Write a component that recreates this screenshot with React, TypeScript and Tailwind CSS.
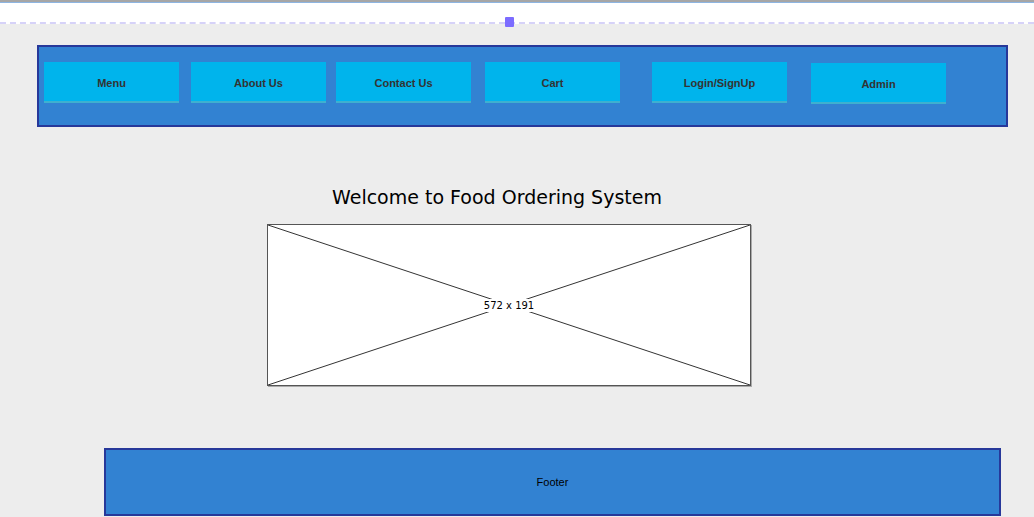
export default function App() {
  const items = [
    { label: "Menu", cls: "ml-0" },
    { label: "About Us", cls: "ml-[12px]" },
    { label: "Contact Us", cls: "ml-[10px]" },
    { label: "Cart", cls: "ml-[14px]" },
    { label: "Login/SignUp", cls: "ml-[32px]" },
    { label: "Admin", cls: "ml-[24px] mt-[1px]" },
  ];

  return (
    <div className="w-[1034px] h-[517px] overflow-hidden bg-[#ededed] flex flex-col" style={{ fontFamily: '"Liberation Sans", Arial, sans-serif' }}>
      {/* editor strip */}
      <div className="h-[2px] bg-[#a6a6a6]" />
      <div className="h-[1px] bg-[#8db5e2]" />
      <div className="relative h-[21px] bg-white border-b-2 border-dashed border-[#d6d2f8]">
        <div className="absolute left-[505px] top-[14px] w-[9px] h-[10px] bg-[#7c6cff] rounded-[1px]" />
      </div>

      {/* nav */}
      <div className="ml-[37px] mt-[21px] w-[971px] h-[82px] bg-[#3282d2] border-2 border-[#27389a] flex items-start pl-[5px] pt-[15px]">
        {items.map((it) => (
          <div
            key={it.label}
            className={`${it.cls} w-[135px] h-[41px] pt-[3px] bg-[#00b4ec] border-b-2 border-[#3fb0cf] flex items-center justify-center text-[11px] font-bold text-[#333]`}
          >
            {it.label}
          </div>
        ))}
      </div>

      {/* title */}
      <div className="mt-[56px] h-[28px] flex justify-center pr-[40px]">
        <h1 className="text-[19px] leading-[28px] text-black" style={{ fontFamily: '"Comic Sans MS", "DejaVu Sans", sans-serif' }}>
          Welcome to Food Ordering System
        </h1>
      </div>

      {/* image placeholder */}
      <div className="ml-[267px] mt-[13px] w-[484px] h-[162px] relative bg-white border border-[#555] shadow-[1px_1px_0_#aaa]">
        <svg className="absolute inset-0 w-full h-full" viewBox="0 0 482 160" preserveAspectRatio="none">
          <line x1="0" y1="0" x2="482" y2="160" stroke="#333" strokeWidth="1" />
          <line x1="482" y1="0" x2="0" y2="160" stroke="#333" strokeWidth="1" />
        </svg>
        <div className="absolute inset-0 flex items-center justify-center">
          <span className="bg-white px-[2px] text-[10px] leading-[13px] text-black" style={{ fontFamily: '"DejaVu Sans", sans-serif' }}>
            572 x 191
          </span>
        </div>
      </div>

      {/* footer */}
      <div className="ml-[104px] mt-[62px] w-[897px] h-[68px] bg-[#3282d2] border-2 border-[#27389a] flex items-center justify-center text-[11px] text-black">
        Footer
      </div>
    </div>
  );
}
